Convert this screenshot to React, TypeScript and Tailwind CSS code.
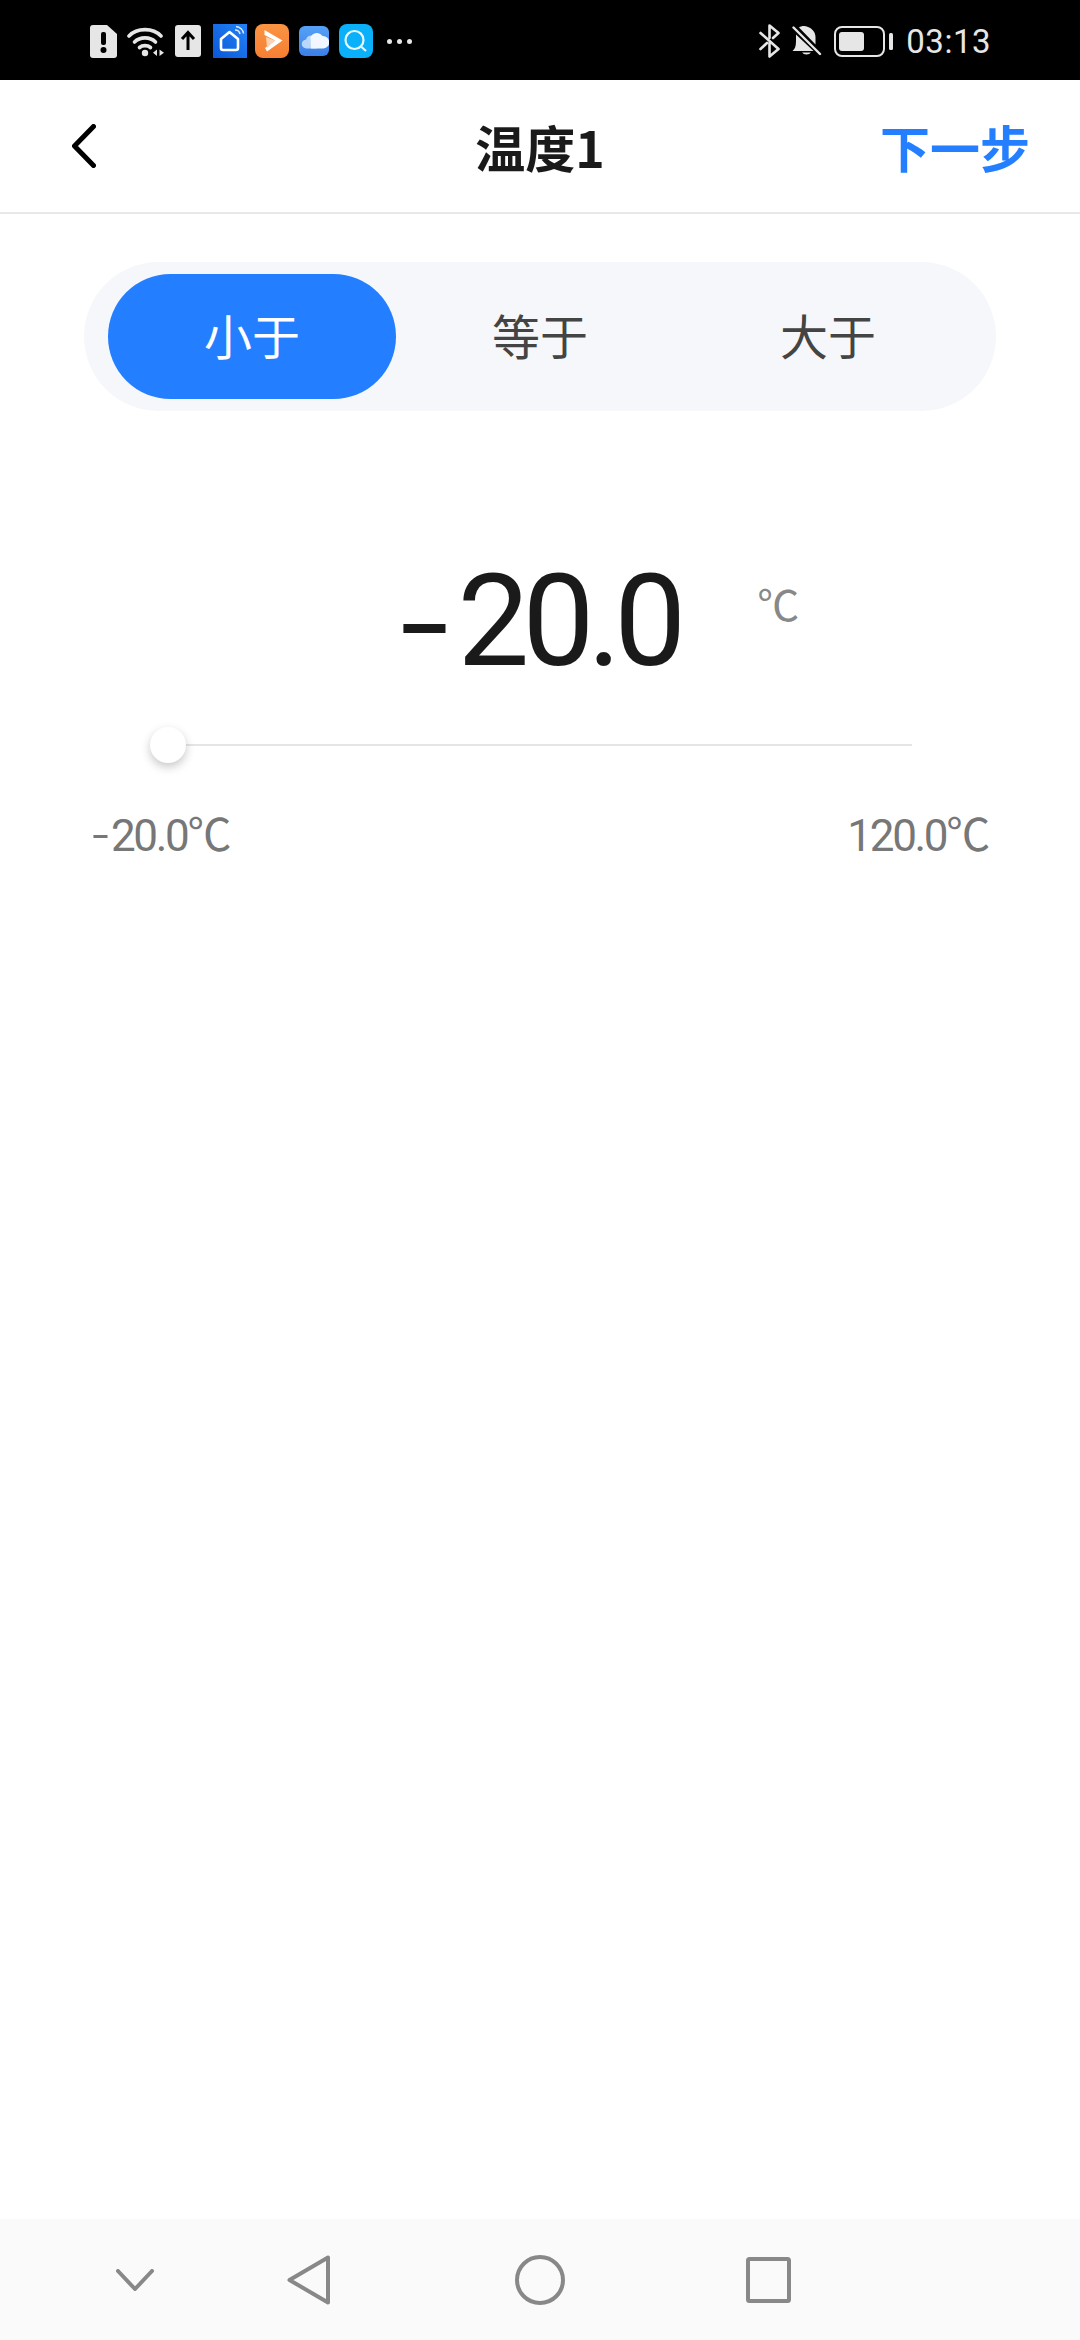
import React from "react";

const cjk = { fontFamily: '"Noto Sans CJK SC", "Noto Sans", sans-serif' };

function StatusLeft() {
  return (
    <div className="flex items-center">
      <svg width="27" height="33" viewBox="0 0 27 33" className="ml-[90px]">
        <path d="M3 0H17L27 9V30a3 3 0 0 1-3 3H3a3 3 0 0 1-3-3V3a3 3 0 0 1 3-3Z" fill="#e6e6e6" />
        <rect x="11" y="7" width="5" height="13" rx="2" fill="#000" />
        <circle cx="13.5" cy="25" r="3" fill="#000" />
      </svg>
      <svg width="37" height="31" viewBox="0 0 37 31" className="ml-[10px]" fill="none" stroke="#e6e6e6" strokeLinecap="round">
        <path d="M2 10C10 1.500 26 1.500 34 10" strokeWidth="3.600" />
        <path d="M7.500 16C13 10.500 23 10.500 28.500 16" strokeWidth="3.600" />
        <path d="M12.500 21.500C15.500 19 20.500 19 23.500 21.500" strokeWidth="3.600" />
        <circle cx="18" cy="27" r="3.200" fill="#e6e6e6" stroke="none" />
        <path d="M30 23.500V30L26 26.750Z" fill="#e6e6e6" stroke="none" />
        <path d="M32.500 23.500V30L37 26.750Z" fill="#e6e6e6" stroke="none" />
      </svg>
      <svg width="26" height="32" viewBox="0 0 26 32" className="ml-[11px]">
        <rect width="26" height="32" rx="3" fill="#e6e6e6" />
        <path d="M13 25V8M7 14L13 7.500L19 14" stroke="#000" strokeWidth="3" fill="none" />
      </svg>
      <svg width="34" height="34" viewBox="0 0 34 34" className="ml-[12px]">
        <defs>
          <linearGradient id="hg" x1="0" y1="1" x2="1" y2="0">
            <stop offset="0" stopColor="#0b57d8" />
            <stop offset="1" stopColor="#2283f5" />
          </linearGradient>
        </defs>
        <rect width="34" height="34" fill="url(#hg)" />
        <path d="M8 15L16.500 8L25 15V24a2 2 0 0 1-2 2H10a2 2 0 0 1-2-2Z" fill="none" stroke="#fff" strokeWidth="2.600" strokeLinejoin="round" />
        <path d="M22 6C24.500 6 26.500 7.500 27 10M23 2.500C27 3 30 6 30.500 9.500" fill="none" stroke="#dbe9ff" strokeWidth="1.500" />
      </svg>
      <svg width="34" height="34" viewBox="0 0 34 34" className="ml-[8px]">
        <defs>
          <linearGradient id="og" x1="0" y1="0" x2="0" y2="1">
            <stop offset="0" stopColor="#fb9442" />
            <stop offset="1" stopColor="#f57f33" />
          </linearGradient>
        </defs>
        <rect width="34" height="34" rx="8" fill="url(#og)" />
        <path d="M9.500 6L27.500 16.500L12 27.500L10 24L20 16.500L9.500 11Z" fill="#fff" />
        <path d="M11 13L20 16.500L12 24Z" fill="#fbd3b4" />
      </svg>
      <svg width="30" height="30" viewBox="0 0 30 30" className="ml-[10px]">
        <defs>
          <linearGradient id="cg" x1="0" y1="0" x2="0" y2="1">
            <stop offset="0" stopColor="#55a2f7" />
            <stop offset="1" stopColor="#3b7fe8" />
          </linearGradient>
        </defs>
        <rect width="30" height="30" rx="6" fill="url(#cg)" />
        <path d="M7.500 22.500a4.500 4.500 0 0 1-.500-9a5 5 0 0 1 7-3.500L18 22.500Z" fill="#b9d6fb" />
        <path d="M12 22.500L11.500 11a7 7 0 0 1 12-1a6 6 0 0 1 1 12.500Z" fill="#f2f7ff" />
      </svg>
      <svg width="34" height="34" viewBox="0 0 34 34" className="ml-[10px]">
        <rect width="34" height="34" rx="8" fill="#0bb0fb" />
        <circle cx="15.500" cy="16" r="9" fill="none" stroke="#e8f8ff" strokeWidth="2.200" />
        <path d="M22.500 23L27 27" stroke="#e8f8ff" strokeWidth="2.200" />
      </svg>
      <div className="ml-[14px] flex items-center gap-[5px]">
        <span className="h-[5px] w-[5px] rounded-full bg-[#e6e6e6]" />
        <span className="h-[5px] w-[5px] rounded-full bg-[#e6e6e6]" />
        <span className="h-[5px] w-[5px] rounded-full bg-[#e6e6e6]" />
      </div>
    </div>
  );
}

function StatusRight() {
  return (
    <div className="flex items-center">
      <svg width="21" height="34" viewBox="0 0 21 34" fill="none" stroke="#e6e6e6" strokeWidth="2.600" strokeLinecap="round" strokeLinejoin="round">
        <path d="M1.500 9L19.500 25L10.500 32.500V19" />
        <path d="M1.500 25L8 19M10.500 14V1.500L19.500 9L14 14" />
      </svg>
      <svg width="30" height="30" viewBox="0 0 30 30" className="ml-[12px]">
        <path d="M7 1.500C9 0 13 -0.500 16 1C21 3 23.500 7 23.500 11V18.500Z" fill="#e6e6e6" />
        <path d="M4 8.500V15C4 20 3 23 0.500 25H21.500Z" fill="#e6e6e6" />
        <path d="M10 26.500a5 3.500 0 0 0 9 0Z" fill="#e6e6e6" />
        <path d="M1.500 1.500L28 28" stroke="#e6e6e6" strokeWidth="2.400" strokeLinecap="round" />
      </svg>
      <svg width="59" height="31" viewBox="0 0 59 31" className="ml-[12px]">
        <rect x="1" y="1" width="49" height="29" rx="7" fill="none" stroke="#e6e6e6" strokeWidth="2" />
        <rect x="5" y="6" width="25" height="19" rx="3" fill="#e6e6e6" />
        <rect x="55" y="7" width="4" height="17" rx="1.500" fill="#e6e6e6" />
      </svg>
      <span className="ml-[13px] text-[33px] leading-none tracking-[0.5px] text-[#e6e6e6]" style={{ fontFamily: "Roboto, sans-serif" }}>
        03:13
      </span>
    </div>
  );
}

export default function App() {
  return (
    <div className="flex h-[2340px] w-[1080px] flex-col overflow-hidden bg-white" style={cjk}>
      <div className="flex h-[80px] items-center justify-between bg-black pr-[89px] pt-[2px]">
        <StatusLeft />
        <StatusRight />
      </div>

      <div className="grid h-[134px] grid-cols-[1fr_auto_1fr] items-center border-b-2 border-[#e8e8e8] px-[50px]">
        <svg width="24" height="44" viewBox="0 0 24 44" fill="none" stroke="#000" strokeWidth="5" strokeLinecap="round" strokeLinejoin="round" className="ml-[22px]">
          <path d="M21.500 2.500L2.500 22L21.500 41.500" />
        </svg>
        <div className="text-[50px] font-bold leading-none text-[#1a1a1a]">温度1</div>
        <div className="justify-self-end text-[50px] font-bold leading-none text-[#237fff]">下一步</div>
      </div>

      <div className="flex flex-1 flex-col">
        <div className="mx-[84px] mt-[48px] flex h-[149px] items-center rounded-full bg-[#f5f7fa] px-[24px]">
          <div className="flex h-[125px] w-[288px] items-center justify-center rounded-full bg-[#237fff] pb-[5px] text-[48px] text-white">小于</div>
          <div className="flex h-[125px] w-[288px] items-center justify-center pb-[5px] text-[48px] text-[#444444]">等于</div>
          <div className="flex h-[125px] w-[288px] items-center justify-center pb-[5px] text-[48px] text-[#444444]">大于</div>
        </div>

        <div className="ml-[399px] mt-[145px] flex items-start">
          <span className="text-[128px] leading-[130px] tracking-[-7px] text-[#1a1a1a]" style={{ fontFamily: "Roboto, sans-serif" }}>
            <span className="mr-[14px] align-[-20px] text-[180px] font-light leading-[0]">-</span>20.0
          </span>
          <span className="ml-[78px] mt-[17px] text-[42px] leading-[60px] text-[#888888]">℃</span>
        </div>

        <div className="relative ml-[150px] mt-[58px] h-[2px] w-[762px] bg-[#e5e5e5]">
          <div className="absolute left-0 top-[-17px] h-[36px] w-[36px] rounded-full bg-white shadow-[0_4px_10px_rgba(0,0,0,0.22)]" />
        </div>

        <div className="mt-[65px] flex justify-between px-[92px] text-[44px] leading-[50px] tracking-[-2.3px] text-[#777777]" style={{ fontFamily: 'Roboto, "Noto Sans CJK SC", sans-serif' }}>
          <span>
            <span className="mr-[4px] align-[-4px] text-[60px] font-light leading-[0]">-</span>20.0℃
          </span>
          <span>120.0℃</span>
        </div>
      </div>

      <div className="flex h-[121px] items-center bg-[#fafafa] pl-[116px]">
        <svg width="38" height="22" viewBox="0 0 38 22" fill="none" stroke="#888888" strokeWidth="4" strokeLinecap="round" strokeLinejoin="round">
          <path d="M2 2L19 20L36 2" />
        </svg>
        <svg width="44" height="50" viewBox="0 0 44 50" fill="none" stroke="#888888" strokeWidth="4" strokeLinejoin="round" className="ml-[133px]">
          <path d="M41 2.500V47.500L2.500 25Z" />
        </svg>
        <svg width="50" height="50" viewBox="0 0 50 50" fill="none" stroke="#888888" strokeWidth="4" className="ml-[184px]">
          <circle cx="25" cy="25" r="23" />
        </svg>
        <svg width="45" height="46" viewBox="0 0 45 46" fill="none" stroke="#888888" strokeWidth="4" strokeLinejoin="round" className="ml-[181px]">
          <rect x="2" y="2" width="41" height="42" rx="1.500" />
        </svg>
      </div>
    </div>
  );
}
